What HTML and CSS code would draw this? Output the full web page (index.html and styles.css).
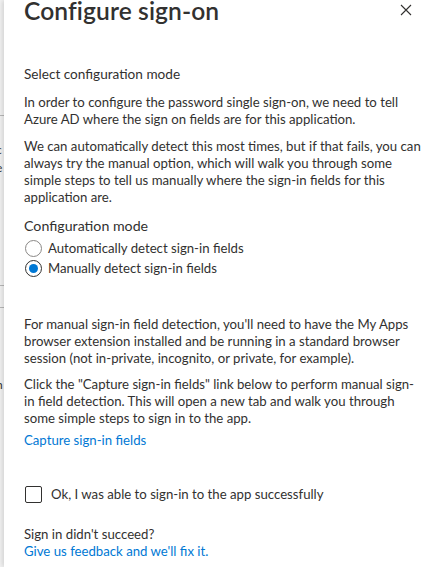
FILE: index.html
```html
<!DOCTYPE html>
<html lang="en">
<head>
<meta charset="utf-8">
<title>Configure sign-on</title>
<link rel="stylesheet" href="styles.css">
</head>
<body>
<div class="backdrop">
  <div class="bd-line bd-line1"></div>
  <div class="bd-frag bd-frag1">c</div>
  <div class="bd-frag bd-frag2">e</div>
  <div class="bd-frag bd-frag3 bd-blue">.</div>
  <div class="bd-line bd-line2"></div>
  <div class="bd-line bd-line3"></div>
  <div class="bd-frag bd-frag4">n</div>
</div>
<main class="panel">
  <header class="panel-header">
    <h1 class="title">Configure sign-on</h1>
    <button class="close" aria-label="Close">
      <svg width="12" height="12" viewBox="0 0 12 12"><path d="M1 1 L11 11 M11 1 L1 11" stroke="#323130" stroke-width="1.1" fill="none"/></svg>
    </button>
  </header>

  <h2 class="section-label">Select configuration mode</h2>
  <p class="text p1">In order to configure the password single sign-on, we need to tell<br>Azure AD where the sign on fields are for this application.</p>
  <p class="text p2">We can automatically detect this most times, but if that fails, you can<br>always try the manual option, which will walk you through some<br>simple steps to tell us manually where the sign-in fields for this<br>application are.</p>

  <div class="field-label">Configuration mode</div>
  <div class="radio-group">
    <label class="radio-row"><span class="radio"></span><span>Automatically detect sign-in fields</span></label>
    <label class="radio-row"><span class="radio radio-on"></span><span>Manually detect sign-in fields</span></label>
  </div>

  <p class="text p3">For manual sign-in field detection, you'll need to have the My Apps<br>browser extension installed and be running in a standard browser<br>session (not in-private, incognito, or private, for example).</p>
  <p class="text p4">Click the "Capture sign-in fields" link below to perform manual sign-<br>in field detection. This will open a new tab and walk you through<br>some simple steps to sign in to the app.</p>
  <a class="link capture" href="#">Capture sign-in fields</a>

  <label class="check-row"><span class="checkbox"></span><span>Ok, I was able to sign-in to the app successfully</span></label>

  <p class="text help">Sign in didn't succeed?<br><a class="link" href="#">Give us feedback and we'll fix it.</a></p>
</main>
</body>
</html>
```
FILE: styles.css
```css
html, body {
  margin: 0;
  padding: 0;
  background: #ffffff;
}
body {
  display: flex;
  width: 427px;
  height: 567px;
  overflow: hidden;
  font-family: "Segoe UI", Lato, "Liberation Sans", sans-serif;
  color: #323130;
  font-size: 13.2px;
  line-height: 17px;
}
.backdrop {
  width: 4px;
  flex: 0 0 4px;
  background: #f4f4f4;
  overflow: hidden;
  display: flex;
  flex-direction: column;
}
.bd-line {
  height: 1px;
  background: #b9b9b9;
  flex: 0 0 1px;
}
.bd-line1 { margin-top: 115px; }
.bd-line2 { margin-top: 100px; }
.bd-line3 { margin-top: 21px; }
.bd-frag {
  height: 14px;
  line-height: 14px;
  font-size: 12px;
  margin-left: -4px;
  color: #323130;
  flex: 0 0 14px;
}
.bd-frag1 { margin-top: 27px; }
.bd-frag2 { margin-top: 4px; }
.bd-frag3 {
  margin-left: -2px;
  font-size: 8px;
  height: 10px;
  line-height: 10px;
  flex-basis: 10px;
}
.bd-blue { color: #0078d4; font-weight: 700; }
.bd-frag4 { margin-top: 70px; }

.panel {
  flex: 1;
  background: #ffffff;
  box-shadow: -2px 0 5px rgba(0, 0, 0, 0.14);
  padding: 0 10px 0 20px;
  display: flex;
  flex-direction: column;
  align-items: flex-start;
}
.panel-header {
  align-self: stretch;
  display: flex;
  justify-content: space-between;
  align-items: flex-start;
  height: 25px;
}
.title {
  margin: -4px 0 0 0;
  font-size: 24.6px;
  line-height: 30px;
  font-weight: 600;
  letter-spacing: 0.1px;
}
.close {
  border: 0;
  background: none;
  padding: 0;
  margin: 4px 9px 0 0;
  width: 12px;
  height: 12px;
  display: flex;
}
.section-label {
  margin: 41px 0 0 0;
  font-size: 13.6px;
  font-weight: 400;
  line-height: 17px;
}
.text {
  margin: 0;
  white-space: nowrap;
}
.p1 { margin-top: 11px; }
.p2 { margin-top: 10px; }
.field-label {
  margin-top: 10px;
  font-size: 14.2px;
  line-height: 20px;
}
.radio-group {
  margin-top: 2px;
  display: flex;
  flex-direction: column;
}
.radio-row {
  display: flex;
  align-items: center;
  height: 20px;
  gap: 6px;
  white-space: nowrap;
}
.radio {
  width: 15px;
  height: 15px;
  border: 1px solid #8a8886;
  border-radius: 50%;
  margin-left: 1px;
  display: flex;
  align-items: center;
  justify-content: center;
  box-sizing: content-box;
}
.radio-on {
  border-color: #323130;
}
.radio-on::after {
  content: "";
  width: 9px;
  height: 9px;
  border-radius: 50%;
  background: #0078d4;
}
.p3 { margin-top: 38px; }
.p4 { margin-top: 9px; }
.link {
  color: #0078d4;
  text-decoration: none;
}
.capture {
  margin-top: 5px;
  line-height: 17px;
}
.check-row {
  margin-top: 35px;
  display: flex;
  align-items: center;
  height: 20px;
  gap: 9px;
  white-space: nowrap;
}
.checkbox {
  width: 15px;
  height: 15px;
  border: 1px solid #323130;
  border-radius: 2px;
  margin-left: 1px;
}
.help {
  margin-top: 22px;
}
```
